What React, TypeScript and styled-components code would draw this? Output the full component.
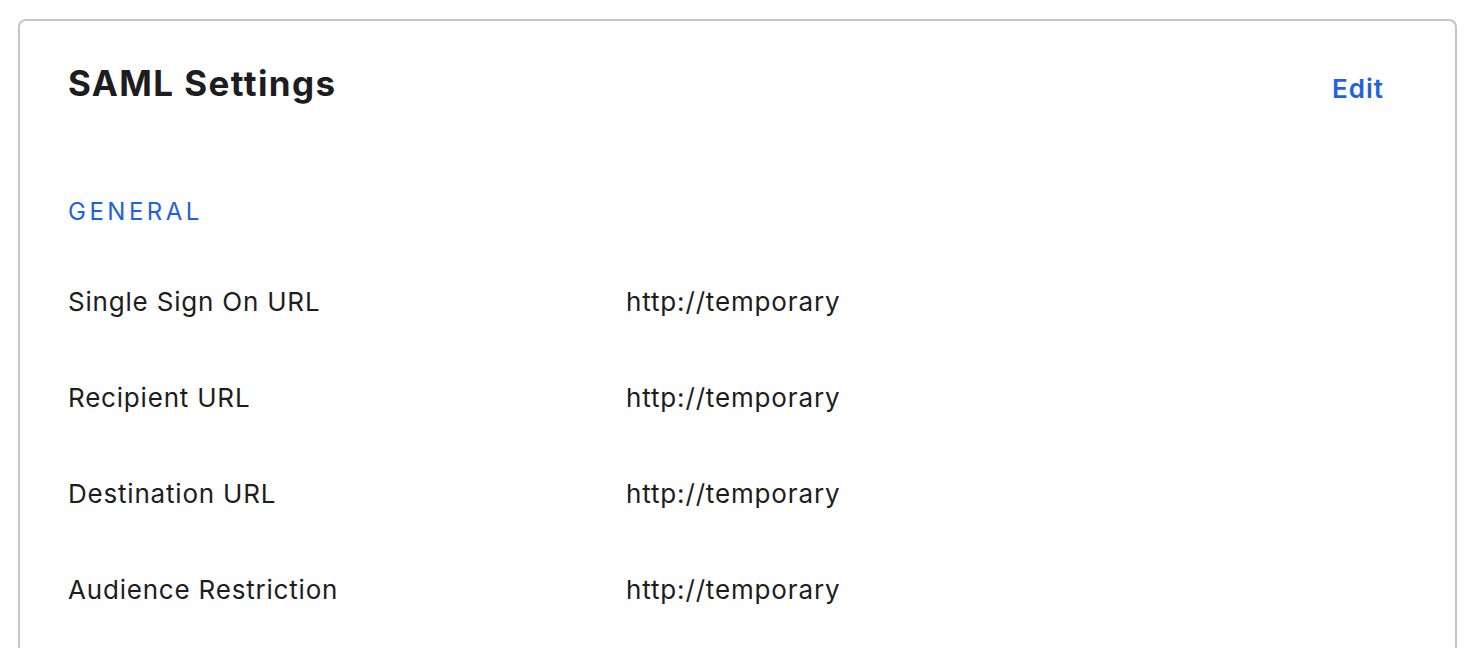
import React from "react";
import styled, { createGlobalStyle } from "styled-components";

const Global = createGlobalStyle`
  html, body { margin: 0; padding: 0; background: #ffffff; }
  body { font-family: Inter, "Noto Sans", sans-serif; color: #1d1d21; overflow: hidden; }
`;

const Page = styled.div`
  padding: 19px 21px 0 18px;
  height: 648px;
  box-sizing: border-box;
`;

const Card = styled.section`
  border: 2px solid #c4c4cb;
  border-bottom: none;
  border-radius: 8px 8px 0 0;
  padding: 40px 71px 0 48px;
  height: 100%;
  box-sizing: border-box;
`;

const Header = styled.div`
  display: flex;
  justify-content: space-between;
  align-items: flex-start;
`;

const Title = styled.h2`
  margin: 2px 0 0 0;
  font-size: 35px;
  line-height: 40px;
  font-weight: 700;
  letter-spacing: 1.4px;
  color: #1d1d21;
`;

const EditLink = styled.a`
  margin-top: 12px;
  font-size: 26px;
  line-height: 32px;
  font-weight: 600;
  letter-spacing: 1px;
  color: #1f62e0;
  text-decoration: none;
  cursor: pointer;
`;

const SectionTitle = styled.h3`
  margin: 91px 0 0 0;
  font-size: 24px;
  line-height: 32px;
  font-weight: 400;
  color: #1f62e0;
  letter-spacing: 3.5px;
`;

const Rows = styled.dl`
  margin: 58px 0 0 0;
  display: grid;
  grid-template-columns: 558px 1fr;
  row-gap: 64px;
`;

const Label = styled.dt`
  margin: 0;
  font-size: 26px;
  line-height: 32px;
  letter-spacing: 0.8px;
  color: #1d1d21;
`;

const Value = styled.dd`
  margin: 0;
  font-size: 26px;
  line-height: 32px;
  letter-spacing: 0.85px;
  color: #1d1d21;
`;

const rows = [
  ["Single Sign On URL", "http://temporary"],
  ["Recipient URL", "http://temporary"],
  ["Destination URL", "http://temporary"],
  ["Audience Restriction", "http://temporary"],
];

export default function App() {
  return (
    <>
      <Global />
      <Page>
        <Card>
          <Header>
            <Title>SAML Settings</Title>
            <EditLink>Edit</EditLink>
          </Header>
          <SectionTitle>GENERAL</SectionTitle>
          <Rows>
            {rows.map(([l, v]) => (
              <React.Fragment key={l}>
                <Label>{l}</Label>
                <Value>{v}</Value>
              </React.Fragment>
            ))}
          </Rows>
        </Card>
      </Page>
    </>
  );
}
